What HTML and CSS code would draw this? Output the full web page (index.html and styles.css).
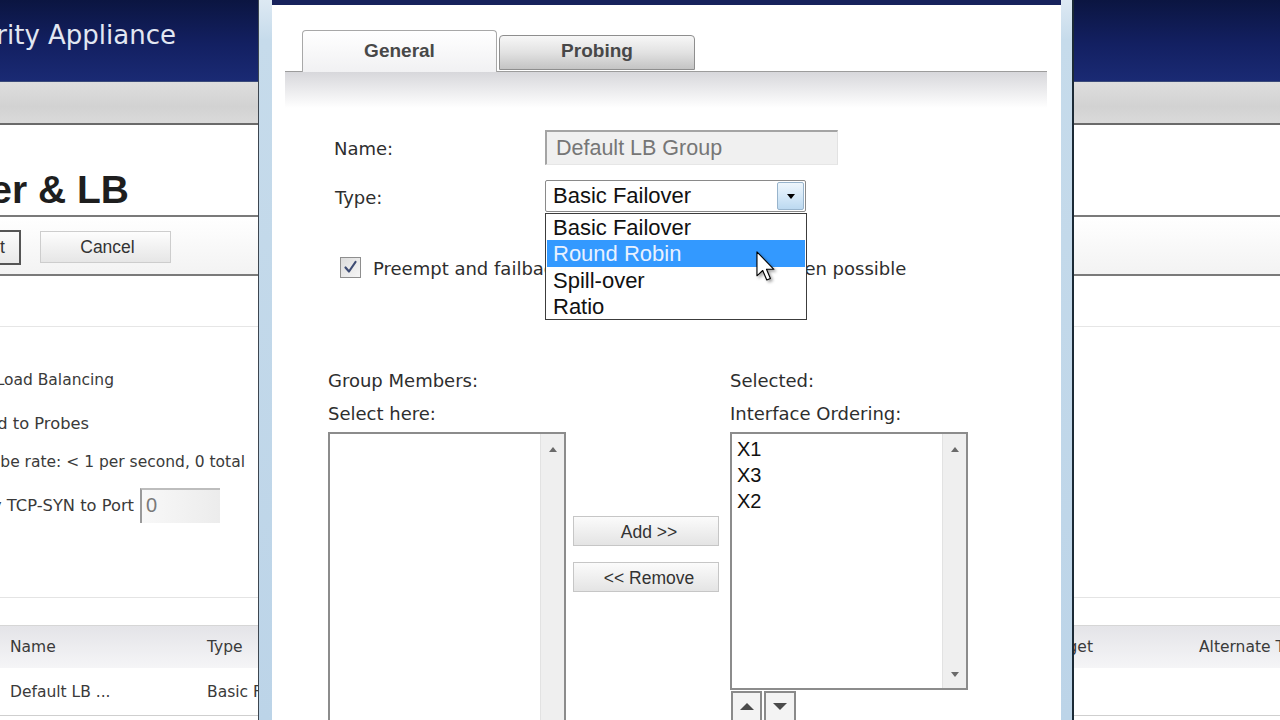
FILE: index.html
```
<!DOCTYPE html>
<html>
<head>
<meta charset="utf-8">
<link rel="stylesheet" href="styles.css">
</head>
<body>
<div class="page">
  <div class="hdr"><div class="cut cut-hdr"><span>SonicWALL Network Security Appliance</span></div></div>
  <div class="bar"></div>
  <div class="titlearea"><div class="cut cut-title"><span>Failover &amp; LB</span></div></div>
  <div class="toolbar">
    <div class="btn btn-accept">Accept</div>
    <div class="btn btn-cancel">Cancel</div>
  </div>
  <div class="sec1"></div>
  <div class="sec2">
    <div class="cut line l1"><span>Enable Load Balancing</span></div>
    <div class="cut line l2"><span>Respond to Probes</span></div>
    <div class="cut line l3"><span>Probe rate: &lt; 1 per second, 0 total</span></div>
    <div class="line4">
      <div class="cut l4"><span>Any TCP-SYN to Port</span></div>
      <div class="portinput">0</div>
    </div>
  </div>
  <div class="spacer"></div>
  <div class="thead">
    <div class="c-name">Name</div>
    <div class="c-type">Type</div>
    <div class="c-target">Probe Target</div>
    <div class="c-gap"></div>
    <div class="c-alt">Alternate Target</div>
  </div>
  <div class="trow">
    <div class="c-name">Default LB ...</div>
    <div class="c-type">Basic Failover</div>
  </div>
</div>

<div class="dialog">
  <div class="pane">
    <div class="tabs">
      <div class="tab tab-active">General</div>
      <div class="tab tab-idle">Probing</div>
    </div>
    <div class="tabhead"></div>
    <div class="form">
      <div class="fields">
        <div class="flabel">Name:</div>
        <div class="textinput">Default LB Group</div>
        <div class="flabel flabel-type">Type:</div>
        <div class="selectwrap">
          <div class="select">
            <span class="selval">Basic Failover</span>
            <span class="selbtn"><span class="tri-down"></span></span>
          </div>
          <div class="droplist">
            <div class="opt">Basic Failover</div>
            <div class="opt opt-hi">Round Robin</div>
            <div class="opt">Spill-over</div>
            <div class="opt">Ratio</div>
          </div>
        </div>
      </div>
      <div class="chkrow">
        <div class="chk">
          <svg width="19" height="19" viewBox="0 0 19 19"><path d="M4.5 9.5 L8 13.5 L14.5 4" fill="none" stroke="#3e4c74" stroke-width="2.2" stroke-linecap="round" stroke-linejoin="round"/></svg>
        </div>
        <div class="chklabel">Preempt and failback to preferred interfaces when possible</div>
      </div>
      <div class="group">
        <div class="gcol">
          <div class="glabel">Group Members:</div>
          <div class="glabel">Select here:</div>
          <div class="listbox listbox-left">
            <div class="items"></div>
            <div class="sbar"><span class="sarrow-up"></span></div>
          </div>
        </div>
        <div class="gmid">
          <div class="mbtn">Add &gt;&gt;</div>
          <div class="mbtn mbtn-remove">&lt;&lt; Remove</div>
        </div>
        <div class="gcol gcol-right">
          <div class="glabel">Selected:</div>
          <div class="glabel">Interface Ordering:</div>
          <div class="listbox listbox-right">
            <div class="items">
              <div class="item">X1</div>
              <div class="item">X3</div>
              <div class="item">X2</div>
            </div>
            <div class="sbar sbar-full"><span class="sarrow-up"></span><span class="sarrow-down"></span></div>
          </div>
          <div class="ordbtns">
            <div class="ordbtn"><span class="otri-up"></span></div>
            <div class="ordbtn"><span class="otri-down"></span></div>
          </div>
        </div>
      </div>
    </div>
  </div>
</div>

<svg class="cursor" width="19" height="31" viewBox="0 0 12.5 20.5">
  <path d="M0.6 0.6 L0.6 16.4 L4.4 12.9 L7.1 19.2 L9.5 18.2 L6.9 12.1 L11.8 12.1 Z" fill="#fff" stroke="#000" stroke-width="0.75" stroke-linejoin="round"/>
</svg>
</body>
</html>
```

FILE: styles.css
```
* { box-sizing: border-box; }
html, body { margin: 0; padding: 0; }
body {
  width: 1280px;
  height: 720px;
  overflow: hidden;
  position: relative;
  background: #fff;
  font-family: "DejaVu Sans", sans-serif;
  font-size: 15.5px;
  color: #3a3a3a;
}

.page { width: 1280px; display: flex; flex-direction: column; }
.page > * { flex: none; }

.cut {
  display: flex;
  justify-content: flex-end;
  overflow: hidden;
  white-space: nowrap;
}
.cut span { flex: none; }

.hdr {
  height: 82px;
  background: linear-gradient(#0b1541 0%, #132062 55%, #1a2a74 100%);
  border-bottom: 1px solid #3a4a7a;
  padding-top: 18px;
}
.cut-hdr {
  width: 176px;
  font-family: "DejaVu Sans", sans-serif;
  font-size: 26px;
  line-height: 34px;
  color: #e2e7f2;
}

.bar {
  height: 43px;
  background: linear-gradient(#dedede 0%, #d2d2d2 60%, #dadada 100%);
  border-bottom: 2px solid #6a6a6a;
}

.titlearea {
  height: 92px;
  border-bottom: 2px solid #7a7a7a;
  padding-top: 44px;
}
.cut-title {
  width: 129px;
  font-family: "Liberation Sans", sans-serif;
  font-weight: bold;
  font-size: 39px;
  line-height: 42px;
  color: #1e1e1e;
}

.toolbar {
  height: 59px;
  border-bottom: 2px solid #7a7a7a;
  background: linear-gradient(#ffffff, #f3f3f3);
  display: flex;
  align-items: flex-start;
  padding-top: 13px;
}
.btn {
  font-family: "Liberation Sans", sans-serif;
  font-size: 17.5px;
  color: #333;
  display: flex;
  align-items: center;
  justify-content: center;
}
.btn-accept {
  width: 86px;
  height: 35px;
  margin-left: -65px;
  border: 2px solid #555;
  background: linear-gradient(#fbfbfb, #e9e9e9);
}
.btn-cancel {
  width: 131px;
  height: 32px;
  margin-left: 19px;
  margin-top: 1px;
  border: 1px solid #cdcdcd;
  background: linear-gradient(#fdfdfd, #e6e6e6);
  padding-left: 4px;
}

.sec1 { height: 51px; border-bottom: 1px solid #e6e6e6; }

.sec2 {
  height: 271px;
  border-bottom: 1px solid #e4e4e4;
  display: flex;
  flex-direction: column;
}
.line { line-height: 24px; height: 24px; }
.l1 { width: 114px; margin-top: 41px; }
.l2 { width: 89px; margin-top: 20px; font-size: 16.3px; }
.l3 { width: 245px; margin-top: 14px; }
.line4 { display: flex; align-items: center; margin-top: 14px; height: 35px; }
.l4 { width: 134px; line-height: 24px; font-size: 16.3px; }
.portinput {
  width: 80px;
  height: 35px;
  margin-left: 6px;
  border-left: 2px solid #9a9a9a;
  border-top: 2px solid #bdbdbd;
  background: linear-gradient(90deg, #f8f8f8, #ececec);
  font-family: "Liberation Sans", sans-serif;
  font-size: 20px;
  color: #7a7a7a;
  padding-left: 4px;
  line-height: 31px;
}

.spacer { height: 27px; }

.thead {
  height: 43px;
  border-top: 1px solid #d6d6d6;
  background: linear-gradient(#e4e4e8, #f5f5f7);
  display: flex;
  align-items: center;
  white-space: nowrap;
}
.c-name { width: 197px; flex: none; padding-left: 10px; }
.c-type { flex: 1; padding-left: 10px; }
.c-target { width: 150px; flex: none; text-align: right; }
.c-gap { width: 106px; flex: none; }
.c-alt { width: 81px; flex: none; overflow: visible; }
.trow {
  height: 48px;
  border-bottom: 1px solid #cfcfcf;
  display: flex;
  align-items: center;
  white-space: nowrap;
}

/* dialog */
.dialog {
  position: absolute;
  left: 258px;
  top: 0;
  width: 816px;
  height: 720px;
  border-left: 1px solid #3d4650;
  border-right: 2px solid #1b2a36;
  background: linear-gradient(#dde9f3 0px, #c6dbeb 40px, #bcd4e8 100%);
  padding: 0 11px 0 13px;
  display: flex;
}
.pane {
  flex: 1;
  background: #fff;
  border-top: 5px solid #17225c;
  display: flex;
  flex-direction: column;
  overflow: hidden;
}
.pane > * { flex: none; }

.tabs {
  margin: 25px 14px 0 13px;
  padding-left: 17px;
  display: flex;
  align-items: flex-end;
  gap: 2px;
  border-bottom: 1px solid #9c9c9c;
}
.tab {
  font-family: "Liberation Sans", sans-serif;
  font-weight: bold;
  font-size: 19px;
  color: #484848;
  display: flex;
  justify-content: center;
  border-radius: 4px 4px 0 0;
}
.tab-active {
  width: 195px;
  height: 42px;
  margin-bottom: -1px;
  border: 1px solid #a8a8a8;
  border-bottom: none;
  background: linear-gradient(#ffffff, #f1f1f3);
  padding-top: 9px;
}
.tab-idle {
  width: 196px;
  height: 35px;
  margin-bottom: 1px;
  border: 1px solid #8e8e8e;
  background: linear-gradient(#f7f7f7 0%, #e2e2e2 50%, #c4c4c4 100%);
  padding-top: 4px;
}
.tabhead {
  height: 36px;
  margin: 0 14px 0 13px;
  background: linear-gradient(#d7d7db, #ffffff);
}

.form {
  display: flex;
  flex-direction: column;
  padding-left: 56px;
  font-family: "DejaVu Sans", sans-serif;
  font-size: 18px;
  color: #2e2e2e;
}
.fields {
  display: grid;
  grid-template-columns: 211px auto;
  grid-template-rows: 35px 32px;
  row-gap: 15px;
  align-items: center;
  margin: 22px 0 0 6px;
}
.flabel { padding-top: 2px; }
.flabel-type { padding-left: 1px; }
.textinput {
  width: 293px;
  height: 35px;
  background: #f0f0f0;
  border-top: 2px solid #a4a4a4;
  border-left: 2px solid #a4a4a4;
  border-right: 1px solid #e2e2e2;
  border-bottom: 1px solid #e6e6e6;
  font-family: "Liberation Sans", sans-serif;
  font-size: 21.5px;
  color: #767676;
  padding-left: 9px;
  line-height: 33px;
}
.selectwrap { position: relative; width: 262px; height: 32px; }
.select {
  width: 261px;
  height: 32px;
  border: 1px solid #8a8a8a;
  border-radius: 2px;
  background: #fff;
  display: flex;
  align-items: stretch;
}
.selval {
  flex: 1;
  font-family: "Liberation Sans", sans-serif;
  font-size: 22px;
  color: #111;
  padding-left: 7px;
  line-height: 30px;
}
.selbtn {
  width: 27px;
  margin: 1px 1px 1px 0;
  border: 1px solid #98b4cc;
  border-radius: 2px;
  background: linear-gradient(#eef6fc 0%, #d6e9f8 50%, #bcd9f0 100%);
  display: flex;
  align-items: center;
  justify-content: center;
}
.tri-down {
  width: 0; height: 0;
  border-left: 4.5px solid transparent;
  border-right: 4.5px solid transparent;
  border-top: 5px solid #000;
}
.droplist {
  position: absolute;
  top: 33px;
  left: 0;
  width: 262px;
  height: 107px;
  border: 1px solid #3c3c3c;
  background: #fff;
  padding: 0 1px;
  z-index: 2;
}
.opt {
  height: 26.3px;
  line-height: 27px;
  font-family: "Liberation Sans", sans-serif;
  font-size: 22px;
  color: #111;
  padding-left: 6px;
  white-space: nowrap;
}
.opt-hi { background: #3399ff; color: #e8f1ff; }

.chkrow {
  display: flex;
  align-items: center;
  gap: 12px;
  margin: 45px 0 0 12px;
  height: 21px;
}
.chk {
  width: 21px;
  height: 21px;
  border: 1px solid #8e8e8e;
  background: linear-gradient(135deg, #dcdcdc, #f6f6f6);
  display: flex;
  align-items: center;
  justify-content: center;
}
.chklabel { white-space: nowrap; line-height: 22px; padding-top: 3px; }

.group { display: flex; margin-top: 86px; align-items: flex-start; }
.gcol { width: 238px; flex: none; display: flex; flex-direction: column; }
.gcol-right { margin-left: 11px; }
.glabel { height: 33px; line-height: 33px; white-space: nowrap; }
.listbox {
  margin-top: 2px;
  width: 238px;
  border: 2px solid #8c8c8c;
  background: #fff;
  display: flex;
  flex: none;
}
.listbox-left { height: 300px; }
.listbox-right { height: 258px; }
.items { flex: 1; padding: 2px 0 0 5px; }
.item {
  height: 26px;
  line-height: 26px;
  font-family: "Liberation Sans", sans-serif;
  font-size: 20px;
  color: #111;
}
.sbar {
  width: 24px;
  flex: none;
  background: #efefef;
  border-left: 1px solid #e2e2e2;
  display: flex;
  flex-direction: column;
  align-items: center;
  justify-content: space-between;
  padding: 13px 0 11px;
}
.sarrow-up {
  width: 0; height: 0;
  border-left: 4.5px solid transparent;
  border-right: 4.5px solid transparent;
  border-bottom: 5px solid #6a6a6a;
}
.sarrow-down {
  width: 0; height: 0;
  border-left: 4.5px solid transparent;
  border-right: 4.5px solid transparent;
  border-top: 5px solid #6a6a6a;
}
.gmid {
  width: 146px;
  flex: none;
  margin-left: 7px;
  padding-top: 152px;
  display: flex;
  flex-direction: column;
  gap: 16px;
}
.mbtn {
  height: 30px;
  border: 1px solid #c6c6c6;
  background: linear-gradient(#fbfbfb, #e4e4e4);
  font-family: "Liberation Sans", sans-serif;
  font-size: 17.5px;
  color: #333;
  display: flex;
  align-items: center;
  justify-content: center;
  padding: 3px 0 0 6px;
}
.ordbtns { display: flex; gap: 2px; margin: 1px 0 0 1px; flex: none; }
.ordbtn {
  width: 31px;
  height: 34px;
  border: 2px solid #8a8a8a;
  background: #f3f3f3;
  display: flex;
  justify-content: center;
  padding-top: 10px;
}
.ordbtn + .ordbtn { width: 32px; }
.otri-up {
  width: 0; height: 0;
  border-left: 7px solid transparent;
  border-right: 7px solid transparent;
  border-bottom: 7px solid #4a4a4a;
}
.otri-down {
  width: 0; height: 0;
  border-left: 7px solid transparent;
  border-right: 7px solid transparent;
  border-top: 7px solid #4a4a4a;
}

.cursor {
  position: absolute;
  left: 756px;
  top: 251px;
  z-index: 5;
  filter: drop-shadow(2px 2px 1.5px rgba(0,0,0,0.35));
}
```
